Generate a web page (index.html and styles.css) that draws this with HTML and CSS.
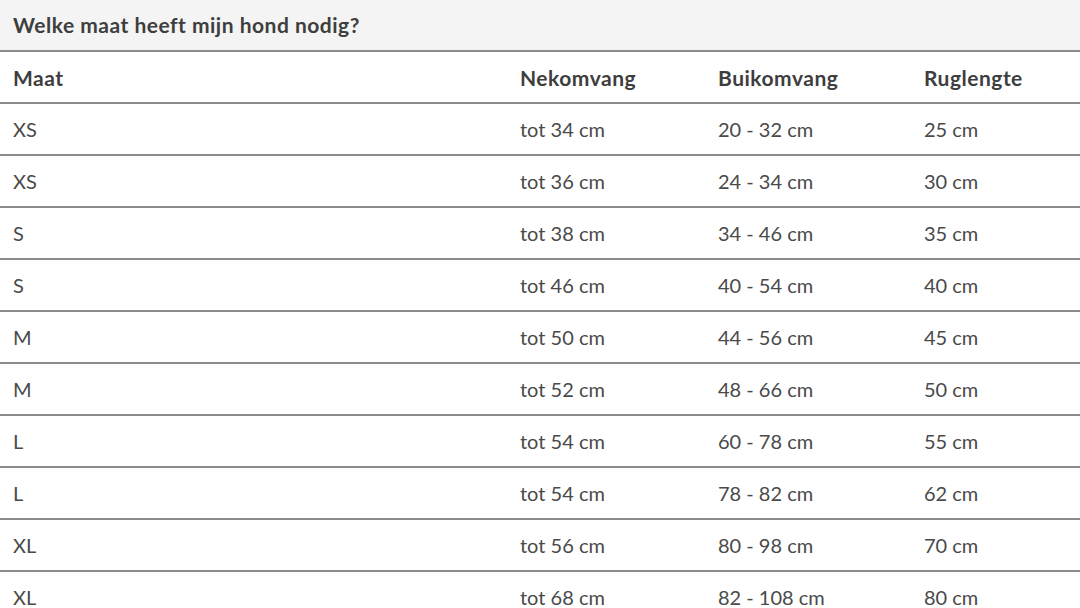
FILE: index.html
```html
<!DOCTYPE html>
<html lang="nl">
<head>
<meta charset="utf-8">
<title>Maattabel</title>
<link rel="stylesheet" href="styles.css">
</head>
<body>
<div class="sizes">
  <div class="title">Welke maat heeft mijn hond nodig?</div>
  <table class="chart">
    <colgroup>
      <col class="c1"><col class="c2"><col class="c3"><col class="c4">
    </colgroup>
    <thead>
      <tr><th>Maat</th><th>Nekomvang</th><th>Buikomvang</th><th>Ruglengte</th></tr>
    </thead>
    <tbody>
      <tr><td>XS</td><td>tot 34 cm</td><td>20 - 32 cm</td><td>25 cm</td></tr>
      <tr><td>XS</td><td>tot 36 cm</td><td>24 - 34 cm</td><td>30 cm</td></tr>
      <tr><td>S</td><td>tot 38 cm</td><td>34 - 46 cm</td><td>35 cm</td></tr>
      <tr><td>S</td><td>tot 46 cm</td><td>40 - 54 cm</td><td>40 cm</td></tr>
      <tr><td>M</td><td>tot 50 cm</td><td>44 - 56 cm</td><td>45 cm</td></tr>
      <tr><td>M</td><td>tot 52 cm</td><td>48 - 66 cm</td><td>50 cm</td></tr>
      <tr><td>L</td><td>tot 54 cm</td><td>60 - 78 cm</td><td>55 cm</td></tr>
      <tr><td>L</td><td>tot 54 cm</td><td>78 - 82 cm</td><td>62 cm</td></tr>
      <tr><td>XL</td><td>tot 56 cm</td><td>80 - 98 cm</td><td>70 cm</td></tr>
      <tr><td>XL</td><td>tot 68 cm</td><td>82 - 108 cm</td><td>80 cm</td></tr>
    </tbody>
  </table>
</div>
</body>
</html>
```
FILE: styles.css
```css
html, body {
  margin: 0;
  padding: 0;
  background: #ffffff;
}
body {
  font-family: Lato, "Liberation Sans", sans-serif;
  color: #4a4a4a;
  overflow: hidden;
}
.sizes {
  width: 1080px;
}
.title {
  height: 50px;
  line-height: 50px;
  padding-left: 13px;
  background: #f4f4f4;
  border-bottom: 2px solid #8c8c8c;
  font-size: 21px;
  letter-spacing: 0.5px;
  font-weight: 700;
  color: #3e3e3e;
}
.chart {
  width: 1080px;
  border-collapse: collapse;
  table-layout: fixed;
}
.c1 { width: 507px; }
.c2 { width: 198px; }
.c3 { width: 206px; }
.c4 { width: 169px; }
.chart th, .chart td {
  height: 50px;
  padding: 0 0 0 13px;
  text-align: left;
  border-bottom: 2px solid #8c8c8c;
  white-space: nowrap;
}
.chart th {
  font-size: 21px;
  letter-spacing: 0.5px;
  font-weight: 700;
  color: #3e3e3e;
}
.chart td {
  font-size: 20px;
  font-weight: 400;
  color: #4a4a4a;
}
```
